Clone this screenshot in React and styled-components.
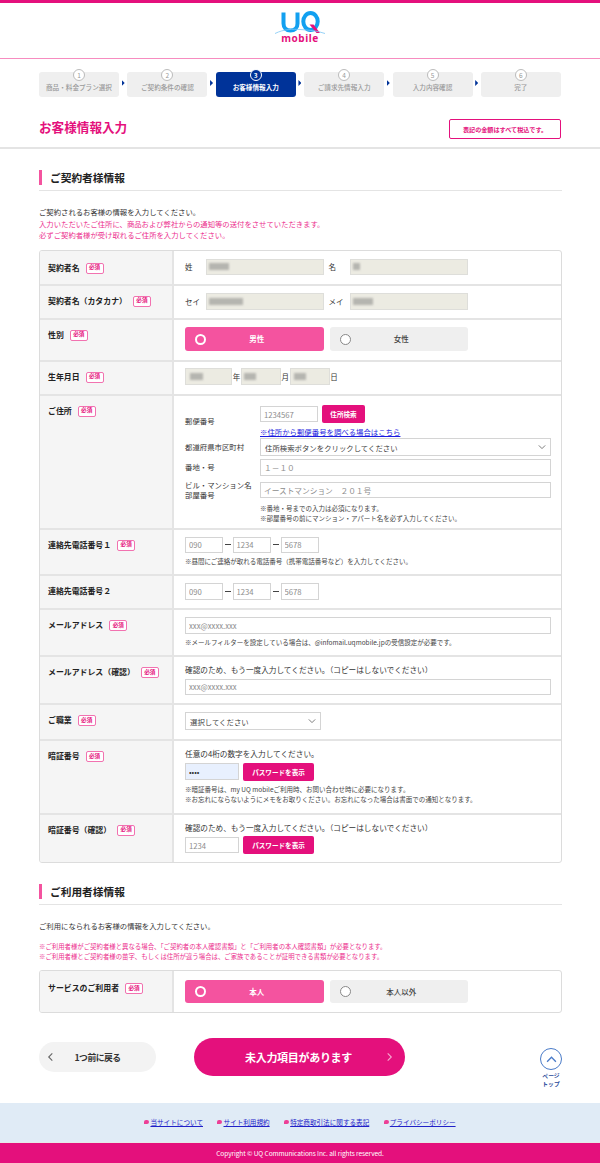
import React from "react";
import styled, { createGlobalStyle } from "styled-components";

const PINK = "#e4107c";
const NAVY = "#003399";
const LINE = "#e4e4e4";

const GlobalStyle = createGlobalStyle`
  html, body { margin: 0; padding: 0; background: #fff; }
  body {
    font-family: "Noto Sans CJK JP", "Noto Sans", sans-serif;
    color: #333;
  }
  * { box-sizing: border-box; }
  input::placeholder { color: #8c8c8c; opacity: 1; }
`;

const Page = styled.div`
  position: relative;
  width: 600px;
  height: 1163px;
  overflow: hidden;
`;

const Header = styled.header`
  height: 59px;
  border-top: 3px solid ${PINK};
  border-bottom: 1px solid #f78cc0;
  display: flex;
  justify-content: center;
  padding-top: 6px;
`;

const StepBar = styled.ol`
  list-style: none;
  margin: 0;
  padding: 13px 39px 0;
  height: 41px;
  display: flex;
  justify-content: space-between;
  align-items: flex-start;
`;

const Step = styled.li`
  position: relative;
  width: 80px;
  height: 25px;
  border-radius: 3px;
  background: ${(p) => (p.$active ? NAVY : "#efefef")};
  color: ${(p) => (p.$active ? "#fff" : "#999")};
  font-size: 6.6px;
  font-weight: ${(p) => (p.$active ? 700 : 500)};
  display: flex;
  align-items: center;
  justify-content: center;
  padding-top: 5px;
`;

const StepNum = styled.span`
  position: absolute;
  top: -3px;
  left: 34px;
  width: 12px;
  height: 12px;
  border-radius: 50%;
  background: ${(p) => (p.$active ? NAVY : "#fff")};
  border: 1px solid ${(p) => (p.$active ? "#fff" : "#bbb")};
  color: ${(p) => (p.$active ? "#fff" : "#999")};
  font-size: 6.5px;
  font-weight: ${(p) => (p.$active ? 700 : 400)};
  display: flex;
  align-items: center;
  justify-content: center;
  line-height: 1;
`;

const StepArrow = styled.li`
  width: 3px;
  height: 6px;
  margin-top: 8px;
  background: ${NAVY};
  clip-path: polygon(0 0, 100% 50%, 0 100%);
`;

const TitleBar = styled.div`
  height: 49px;
  padding: 6px 39px 0;
  border-bottom: 2px solid ${LINE};
  display: flex;
  align-items: flex-start;
  justify-content: space-between;
`;

const PageTitle = styled.h1`
  margin: 12px 0 0;
  font-size: 12.6px;
  line-height: 18px;
  font-weight: 700;
  color: ${PINK};
`;

const TaxNote = styled.div`
  width: 112px;
  height: 20px;
  margin-top: 13px;
  border: 1.5px solid ${PINK};
  border-radius: 2px;
  color: ${PINK};
  font-size: 6.1px;
  font-weight: 700;
  display: flex;
  align-items: center;
  justify-content: center;
`;

const Main = styled.main`
  padding: 0 38px 0 39px;
`;

const SectionHead = styled.h2`
  margin: ${(p) => p.$top}px 0 0;
  height: 21px;
  padding: 0 0 6px 11px;
  border-bottom: 1px solid ${LINE};
  font-size: 10.7px;
  line-height: 15px;
  font-weight: 700;
  color: #222;
  position: relative;
  &::before {
    content: "";
    position: absolute;
    left: 0;
    top: 0;
    width: 3px;
    height: 15px;
    background: #f4539f;
  }
`;

const Lead = styled.p`
  margin: ${(p) => p.$top || 0}px 0 0;
  font-size: ${(p) => p.$size || 7.35}px;
  line-height: ${(p) => p.$lh || 11.5}px;
  color: ${(p) => (p.$pink ? "#ec2f8e" : "#333")};
`;

const Table = styled.div`
  margin-top: ${(p) => p.$top}px;
  width: 523px;
  border: 1px solid #dcdcdc;
  border-radius: 3px;
  overflow: hidden;
`;

const Row = styled.div`
  display: grid;
  grid-template-columns: 134px 1fr;
  height: ${(p) => p.$h}px;
  border-top: ${(p) => (p.$first ? "none" : `2px solid ${LINE}`)};
`;

const LabelCell = styled.div`
  background: #f5f5f5;
  border-right: 2px solid ${LINE};
  padding: ${(p) => (p.$first ? 11 : 9)}px 0 0 8px;
  display: flex;
  align-items: flex-start;
  gap: 6px;
  font-size: 7.9px;
  line-height: 12px;
  font-weight: 700;
  color: #222;
`;

const Required = styled.span`
  width: 18px;
  height: 11px;
  margin-top: 1px;
  border: 1px solid #f272b0;
  border-radius: 2px;
  background: #fff;
  color: ${PINK};
  font-size: 5.6px;
  font-weight: 700;
  line-height: 1;
  display: flex;
  align-items: center;
  justify-content: center;
`;

const Cell = styled.div`
  padding: ${(p) => p.$pt || 0}px 0 0 11px;
  display: flex;
  flex-direction: column;
  align-items: flex-start;
  font-size: 7.5px;
  color: #333;
`;

const Inline = styled.div`
  display: flex;
  align-items: center;
  gap: ${(p) => p.$gap || 0}px;
  margin-top: ${(p) => p.$top || 0}px;
`;

const NameLabel = styled.span`
  width: 21px;
  font-size: 7.5px;
`;

const UnitLabel = styled.span`
  font-size: 7.5px;
  width: ${(p) => p.$w}px;
  text-align: ${(p) => p.$align || "left"};
`;

const Filled = styled.div`
  width: ${(p) => p.$w}px;
  height: 16.5px;
  background: #ecebe2;
  border: 1px solid #dededa;
  display: flex;
  align-items: center;
  padding-left: 2px;
`;

const Smudge = styled.span`
  display: block;
  width: ${(p) => p.$w}px;
  height: 7px;
  margin-left: ${(p) => p.$ml || 0}px;
  background: #b5b5b0;
  filter: blur(1px);
`;

const Input = styled.input`
  display: block;
  width: ${(p) => p.$w}px;
  height: ${(p) => p.$h || 16.5}px;
  padding: 0 3px;
  margin: ${(p) => p.$top || 0}px 0 0;
  border: 1px solid #d4d4d4;
  border-radius: 0;
  outline: none;
  background: ${(p) => p.$bg || "#fff"};
  font-family: inherit;
  font-size: 7.7px;
  color: #333;
`;

const Dash = styled.span`
  width: 10px;
  display: flex;
  justify-content: center;
  &::before {
    content: "";
    width: 6px;
    height: 1px;
    background: #444;
  }
`;

const PinkButton = styled.button`
  width: ${(p) => p.$w}px;
  height: 18px;
  margin-left: 4px;
  padding: 0;
  border: none;
  border-radius: 2px;
  background: ${PINK};
  color: #fff;
  font-family: inherit;
  font-size: 6.6px;
  font-weight: 700;
`;

const Note = styled.p`
  margin: ${(p) => p.$top || 0}px 0 0;
  font-size: 6.5px;
  line-height: 10px;
  color: #444;
`;

const RadioGroup = styled.div`
  display: flex;
  gap: 6px;
`;

const Radio = styled.label`
  position: relative;
  width: 138.5px;
  height: 23.5px;
  border-radius: 3px;
  background: ${(p) => (p.$on ? "#f4539f" : "#efefef")};
  color: ${(p) => (p.$on ? "#fff" : "#444")};
  font-size: 7.5px;
  font-weight: ${(p) => (p.$on ? 700 : 500)};
  display: flex;
  align-items: center;
  justify-content: center;
  padding-left: 5px;
`;

const RadioDot = styled.span`
  position: absolute;
  left: 10px;
  top: 6.5px;
  width: 11px;
  height: 11px;
  border-radius: 50%;
  background: ${(p) => (p.$on ? "#f4539f" : "#fff")};
  border: ${(p) => (p.$on ? "2.5px solid #fff" : "1px solid #888")};
`;

const AddrRow = styled.div`
  display: flex;
  align-items: center;
  width: 100%;
  margin-top: ${(p) => p.$top || 0}px;
`;

const AddrLabel = styled.div`
  width: 75px;
  flex: none;
  font-size: 7.4px;
  line-height: 10px;
  color: #333;
`;

const AddrLink = styled.a`
  display: block;
  margin-top: 4px;
  font-size: 7.4px;
  line-height: 10px;
  color: #1a1ae0;
  text-decoration: underline;
`;

const SelectBox = styled.div`
  width: ${(p) => p.$w}px;
  height: 18px;
  border: 1px solid #d4d4d4;
  background: #fff;
  padding: 0 4px;
  display: flex;
  align-items: center;
  justify-content: space-between;
  font-size: 7.4px;
  color: #444;
`;

const Actions = styled.div`
  margin-top: 25px;
  height: 38px;
  display: flex;
  align-items: center;
  gap: 38px;
`;

const BackButton = styled.button`
  position: relative;
  width: 117px;
  height: 30px;
  padding: 0;
  border: none;
  border-radius: 15px;
  background: #f3f3f3;
  color: #333;
  font-family: inherit;
  font-size: 8.8px;
  font-weight: 700;
  letter-spacing: -0.5px;
`;

const SubmitButton = styled.button`
  position: relative;
  width: 211px;
  height: 38px;
  padding: 0 2px 0 0;
  border: none;
  border-radius: 19px;
  background: ${PINK};
  color: #fff;
  font-family: inherit;
  font-size: 11px;
  font-weight: 700;
  letter-spacing: -0.3px;
`;

const ChevronSlot = styled.span`
  position: absolute;
  top: 50%;
  left: ${(p) => p.$left}px;
  transform: translateY(-50%);
  display: flex;
`;

const PageTop = styled.a`
  position: absolute;
  left: 540px;
  top: 1048px;
  width: 22px;
  display: flex;
  flex-direction: column;
  align-items: center;
  color: #2a4a9a;
  font-size: 5.8px;
  font-weight: 700;
  line-height: 8px;
  text-align: center;
`;

const PageTopCircle = styled.span`
  width: 22px;
  height: 22px;
  margin-bottom: 2px;
  border: 1px solid #4a7bc8;
  border-radius: 50%;
  background: #fff;
  display: flex;
  align-items: center;
  justify-content: center;
`;

const FooterLinks = styled.nav`
  margin-top: 26.5px;
  height: 40.5px;
  border-bottom: 1px solid #e8e8e8;
  background: #e0ebf6;
  display: flex;
  justify-content: center;
  align-items: center;
  gap: 14.5px;
`;

const FooterLink = styled.a`
  display: flex;
  align-items: center;
  gap: 1px;
  font-size: 6.6px;
  color: #2020c8;
  text-decoration: underline;
  &::before {
    content: "";
    width: 5px;
    height: 4px;
    border-radius: 2px 2px 2px 0;
    background: #ec3f96;
  }
`;

const Copyright = styled.footer`
  height: 20px;
  background: ${PINK};
  color: #fff;
  font-size: 6.6px;
  letter-spacing: -0.1px;
  display: flex;
  align-items: center;
  justify-content: center;
`;

const Chevron = ({ dir = "down", size = 8, color = "#777" }) => {
  const d = {
    down: "M1 3l4 4 4-4",
    up: "M1 7l4-4 4 4",
    left: "M7 1L3 5l4 4",
    right: "M3 1l4 4-4 4",
  }[dir];
  return (
    <svg width={size} height={size} viewBox="0 0 10 10" fill="none" stroke={color} strokeWidth="1.2">
      <path d={d} />
    </svg>
  );
};

const Logo = () => (
  <svg width="52" height="38" viewBox="0 0 52 38">
    <path d="M9.5 3.5v11c0 4.5 3 7 7 7s7-2.5 7-7v-11" fill="none" stroke="#12a0f0" strokeWidth="4" />
    <ellipse cx="36.5" cy="12.5" rx="7.2" ry="8.5" fill="none" stroke="#12a0f0" strokeWidth="4" />
    <path d="M35.5 15.5l7 8.5h3.5l-6.5-8.5z" fill={PINK} />
    <path d="M1 24.5C10 20 19 20 26 20.5s17 1 25 4" fill="none" stroke="#7cc6f5" strokeWidth="0.8" />
    <text x="26" y="32.5" textAnchor="middle" fontFamily="'Noto Sans', sans-serif" fontWeight="700" fontSize="10" letterSpacing="0.5" fill={PINK}>
      mobile
    </text>
  </svg>
);

const steps = ["商品・料金プラン選択", "ご契約条件の確認", "お客様情報入力", "ご請求先情報入力", "入力内容確認", "完了"];

const footerLinks = ["当サイトについて", "サイト利用規約", "特定商取引法に関する表記", "プライバシーポリシー"];

const Label = ({ text, required = true, first }) => (
  <LabelCell $first={first}>
    {text}
    {required && <Required>必須</Required>}
  </LabelCell>
);

const Tel = () => (
  <Inline>
    <Input $w={37.5} placeholder="090" />
    <Dash />
    <Input $w={38} placeholder="1234" />
    <Dash />
    <Input $w={38} placeholder="5678" />
  </Inline>
);

export default function App() {
  return (
    <Page>
      <GlobalStyle />
      <Header>
        <Logo />
      </Header>

      <StepBar>
        {steps.map((s, i) => (
          <React.Fragment key={s}>
            {i > 0 && <StepArrow />}
            <Step $active={i === 2}>
              <StepNum $active={i === 2}>{i + 1}</StepNum>
              {s}
            </Step>
          </React.Fragment>
        ))}
      </StepBar>

      <TitleBar>
        <PageTitle>お客様情報入力</PageTitle>
        <TaxNote>表記の金額はすべて税込です。</TaxNote>
      </TitleBar>

      <Main>
        <SectionHead $top={21}>ご契約者様情報</SectionHead>
        <Lead $top={15}>ご契約されるお客様の情報を入力してください。</Lead>
        <Lead $pink>入力いただいたご住所に、商品および弊社からの通知等の送付をさせていただきます。</Lead>
        <Lead $pink>必ずご契約者様が受け取れるご住所を入力してください。</Lead>

        <Table $top={9}>
          <Row $first $h={33}>
            <Label first text="契約者名" />
            <Cell $pt={8}>
              <Inline $gap={4.5}>
                <Inline>
                  <NameLabel>姓</NameLabel>
                  <Filled $w={118}><Smudge $w={20} /></Filled>
                </Inline>
                <Inline>
                  <NameLabel>名</NameLabel>
                  <Filled $w={118}><Smudge $w={7} /></Filled>
                </Inline>
              </Inline>
            </Cell>
          </Row>
          <Row $h={34}>
            <Label text="契約者名（カタカナ）" />
            <Cell $pt={7.5}>
              <Inline $gap={4.5}>
                <Inline>
                  <NameLabel>セイ</NameLabel>
                  <Filled $w={118}><Smudge $w={34} /></Filled>
                </Inline>
                <Inline>
                  <NameLabel>メイ</NameLabel>
                  <Filled $w={118}><Smudge $w={20} /></Filled>
                </Inline>
              </Inline>
            </Cell>
          </Row>
          <Row $h={42}>
            <Label text="性別" />
            <Cell $pt={7.5}>
              <RadioGroup>
                <Radio $on><RadioDot $on />男性</Radio>
                <Radio><RadioDot />女性</Radio>
              </RadioGroup>
            </Cell>
          </Row>
          <Row $h={34}>
            <Label text="生年月日" />
            <Cell $pt={6.5}>
              <Inline>
                <Filled $w={47}><Smudge $w={13} $ml={2} /></Filled>
                <UnitLabel $w={9} $align="center">年</UnitLabel>
                <Filled $w={40}><Smudge $w={12} /></Filled>
                <UnitLabel $w={8.5} $align="center">月</UnitLabel>
                <Filled $w={40}><Smudge $w={12} $ml={1} /></Filled>
                <UnitLabel $w={9} $align="center">日</UnitLabel>
              </Inline>
            </Cell>
          </Row>
          <Row $h={134}>
            <Label text="ご住所" />
            <Cell $pt={9.5}>
              <AddrRow>
                <AddrLabel>郵便番号</AddrLabel>
                <div>
                  <Inline>
                    <Input $w={58} placeholder="1234567" />
                    <PinkButton $w={43}>住所検索</PinkButton>
                  </Inline>
                  <AddrLink>※住所から郵便番号を調べる場合はこちら</AddrLink>
                </div>
              </AddrRow>
              <AddrRow $top={1}>
                <AddrLabel>都道府県市区町村</AddrLabel>
                <SelectBox $w={291}>
                  住所検索ボタンをクリックしてください
                  <Chevron />
                </SelectBox>
              </AddrRow>
              <AddrRow $top={3}>
                <AddrLabel>番地・号</AddrLabel>
                <Input $w={291} placeholder="１－１０" />
              </AddrRow>
              <AddrRow $top={4.5}>
                <AddrLabel>ビル・マンション名<br />部屋番号</AddrLabel>
                <Input $w={291} placeholder="イーストマンション　２０１号" />
              </AddrRow>
              <AddrRow $top={3}>
                <AddrLabel />
                <div>
                  <Note>※番地・号までの入力は必須になります。</Note>
                  <Note>※部屋番号の前にマンション・アパート名を必ず入力してください。</Note>
                </div>
              </AddrRow>
            </Cell>
          </Row>
          <Row $h={46.5}>
            <Label text="連絡先電話番号１" />
            <Cell $pt={7}>
              <Tel />
              <Note $top={3}>※昼間にご連絡が取れる電話番号（携帯電話番号など）を入力してください。</Note>
            </Cell>
          </Row>
          <Row $h={34}>
            <Label text="連絡先電話番号２" required={false} />
            <Cell $pt={7}>
              <Tel />
            </Cell>
          </Row>
          <Row $h={47}>
            <Label text="メールアドレス" />
            <Cell $pt={7}>
              <Input $w={366} placeholder="xxx@xxxx.xxx" />
              <Note $top={3}>※メールフィルターを設定している場合は、@infomail.uqmobile.jpの受信設定が必要です。</Note>
            </Cell>
          </Row>
          <Row $h={48}>
            <Label text="メールアドレス（確認）" />
            <Cell $pt={7}>
              <Lead $size={7.65} $lh={11}>確認のため、もう一度入力してください。（コピーはしないでください）</Lead>
              <Input $w={366} $top={3.5} placeholder="xxx@xxxx.xxx" />
            </Cell>
          </Row>
          <Row $h={36}>
            <Label text="ご職業" />
            <Cell $pt={7}>
              <SelectBox $w={136}>
                選択してください
                <Chevron />
              </SelectBox>
            </Cell>
          </Row>
          <Row $h={73.5}>
            <Label text="暗証番号" />
            <Cell $pt={7}>
              <Lead $size={7.65} $lh={11}>任意の4桁の数字を入力してください。</Lead>
              <Inline $top={3.5}>
                <Input $w={54} $bg="#e8f0fe" type="password" defaultValue="1234" />
                <PinkButton $w={71}>パスワードを表示</PinkButton>
              </Inline>
              <Note $top={3}>※暗証番号は、my UQ mobileご利用時、お問い合わせ時に必要になります。</Note>
              <Note>※お忘れにならないようにメモをお取りください。お忘れになった場合は書面での通知となります。</Note>
            </Cell>
          </Row>
          <Row $h={49}>
            <Label text="暗証番号（確認）" />
            <Cell $pt={7}>
              <Lead $size={7.65} $lh={11}>確認のため、もう一度入力してください。（コピーはしないでください）</Lead>
              <Inline $top={3.5}>
                <Input $w={54} placeholder="1234" />
                <PinkButton $w={71}>パスワードを表示</PinkButton>
              </Inline>
            </Cell>
          </Row>
        </Table>

        <SectionHead $top={21}>ご利用者様情報</SectionHead>
        <Lead $top={15}>ご利用になられるお客様の情報を入力してください。</Lead>
        <Lead $pink $top={11} $size={6.4} $lh={10}>※ご利用者様がご契約者様と異なる場合、「ご契約者の本人確認書類」と「ご利用者の本人確認書類」が必要となります。</Lead>
        <Lead $pink $size={6.4} $lh={10}>※ご利用者様とご契約者様の苗字、もしくは住所が違う場合は、ご家族であることが証明できる書類が必要となります。</Lead>

        <Table $top={8}>
          <Row $first $h={41}>
            <Label first text="サービスのご利用者" />
            <Cell $pt={8.5}>
              <RadioGroup>
                <Radio $on><RadioDot $on />本人</Radio>
                <Radio><RadioDot />本人以外</Radio>
              </RadioGroup>
            </Cell>
          </Row>
        </Table>

        <Actions>
          <BackButton>
            <ChevronSlot $left={7}><Chevron dir="left" size={9} color="#666" /></ChevronSlot>
            1つ前に戻る
          </BackButton>
          <SubmitButton>
            <ChevronSlot $left={191}><Chevron dir="right" size={9} color="#f7a8cf" /></ChevronSlot>
            未入力項目があります
          </SubmitButton>
        </Actions>
      </Main>

      <PageTop>
        <PageTopCircle><Chevron dir="up" size={11} color="#4a7bc8" /></PageTopCircle>
        ページ<br />トップ
      </PageTop>

      <FooterLinks>
        {footerLinks.map((l) => (
          <FooterLink key={l}>{l}</FooterLink>
        ))}
      </FooterLinks>
      <Copyright>Copyright © UQ Communications Inc. all rights reserved.</Copyright>
    </Page>
  );
}
